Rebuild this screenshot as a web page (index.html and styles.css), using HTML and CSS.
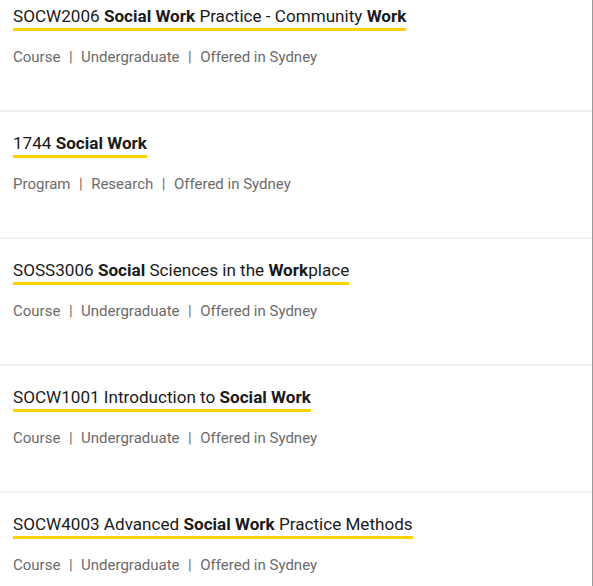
FILE: index.html
```html
<!DOCTYPE html>
<html>
<head>
<meta charset="utf-8">
<link rel="stylesheet" href="styles.css">
</head>
<body>
<div class="panel">
  <ul class="results">
    <li class="result">
      <a class="title" href="#">SOCW2006 <b>Social Work</b> Practice - Community <b>Work</b></a>
      <div class="meta"><span>Course</span><span class="sep">|</span><span>Undergraduate</span><span class="sep">|</span><span>Offered in Sydney</span></div>
    </li>
    <li class="result">
      <a class="title" href="#">1744 <b>Social Work</b></a>
      <div class="meta"><span>Program</span><span class="sep">|</span><span>Research</span><span class="sep">|</span><span>Offered in Sydney</span></div>
    </li>
    <li class="result">
      <a class="title" href="#">SOSS3006 <b>Social</b> Sciences in the <b>Work</b>place</a>
      <div class="meta"><span>Course</span><span class="sep">|</span><span>Undergraduate</span><span class="sep">|</span><span>Offered in Sydney</span></div>
    </li>
    <li class="result">
      <a class="title" href="#">SOCW1001 Introduction to <b>Social Work</b></a>
      <div class="meta"><span>Course</span><span class="sep">|</span><span>Undergraduate</span><span class="sep">|</span><span>Offered in Sydney</span></div>
    </li>
    <li class="result">
      <a class="title" href="#">SOCW4003 Advanced <b>Social Work</b> Practice Methods</a>
      <div class="meta"><span>Course</span><span class="sep">|</span><span>Undergraduate</span><span class="sep">|</span><span>Offered in Sydney</span></div>
    </li>
  </ul>
</div>
</body>
</html>
```

FILE: styles.css
```css
html, body {
  margin: 0;
  padding: 0;
  background: #ffffff;
  font-family: Roboto, "Liberation Sans", Arial, sans-serif;
  overflow: hidden;
}
.panel {
  width: 592px;
  height: 586px;
  border-right: 1px solid #9a9a9a;
  overflow: hidden;
}
.results {
  list-style: none;
  margin: -15px 0 0 0;
  padding: 0;
}
.result {
  height: 127px;
  box-sizing: border-box;
  padding: 21px 4px 0 13px;
  border-bottom: 2px solid #f1f1f1;
}
.title {
  display: inline-block;
  font-size: 17.1px;
  line-height: 21px;
  color: #1a1a1a;
  text-decoration: none;
  border-bottom: 3px solid #ffd200;
  padding-bottom: 1px;
}
.title b {
  font-weight: 700;
}
.meta {
  margin-top: 17px;
  font-size: 15px;
  line-height: 18px;
  color: #6b6b6b;
  display: flex;
}
.sep {
  margin: 0 8.5px;
}
```
